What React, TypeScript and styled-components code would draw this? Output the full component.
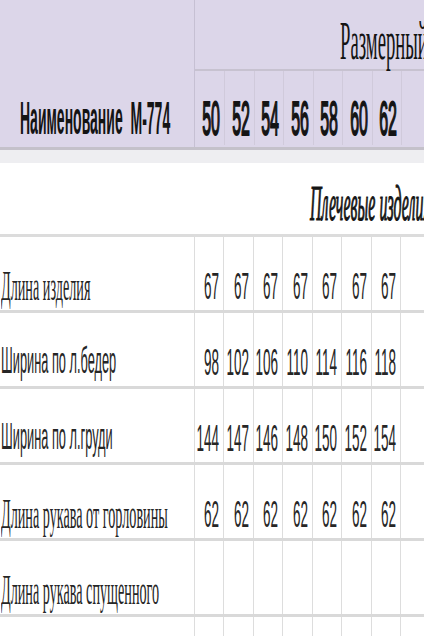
import React from "react";
import styled, { createGlobalStyle } from "styled-components";

const Global = createGlobalStyle`
  html, body { margin: 0; padding: 0; background: #ffffff; }
  body { width: 424px; height: 636px; overflow: hidden; }
`;

const SANS = `"Liberation Sans", Arial, sans-serif`;
const SERIF = `"Liberation Serif", "Times New Roman", serif`;

const COLS = `194px 29px 30px 29px 30px 29px 30px 29px 1fr`;
const SIZE_COLS = `29px 30px 29px 30px 29px 30px 29px 1fr`;

const Sheet = styled.div`
  width: 424px;
  height: 636px;
  overflow: hidden;
  background: #ffffff;
  color: #141414;
`;

const Head = styled.div`
  display: flex;
  background: #dcd6e9;
  border-bottom: 3px solid #c4c1ca;
`;

const NameCell = styled.div`
  width: 194px;
  flex: none;
  height: 147px;
  display: flex;
  align-items: center;
  padding: 86px 0 0 20px;
  box-sizing: border-box;
`;

const SizeBlock = styled.div`
  flex: 1;
  display: flex;
  flex-direction: column;
  border-left: 1px solid #c6c0d3;
  overflow: hidden;
`;

const TitleCell = styled.div`
  height: 71px;
  display: flex;
  align-items: center;
  padding: 16px 0 0 145px;
  box-sizing: border-box;
  border-bottom: 2px solid #c7c2d0;
  white-space: nowrap;
`;

const NumRow = styled.div`
  height: 74px;
  display: grid;
  grid-template-columns: ${SIZE_COLS};
`;

const HeadNum = styled.div<{ $first?: boolean }>`
  display: flex;
  align-items: center;
  justify-content: flex-end;
  padding: 24px 4px 0 0;
  border-left: ${(p) => (p.$first ? "none" : "1px solid #d0cadb")};
`;

const Band = styled.div`
  height: 13px;
  background: #eeeef1;
`;

const Section = styled.div`
  height: 74px;
  display: flex;
  align-items: center;
  padding: 12px 0 0 310px;
  box-sizing: border-box;
  border-bottom: 3px solid #dcdcdc;
  white-space: nowrap;
  overflow: hidden;
`;

const Row = styled.div`
  display: grid;
  grid-template-columns: ${COLS};
  height: 76px;
  box-sizing: border-box;
  border-bottom: 3px solid #d9d9d9;
  color: #262626;
`;

const Label = styled.div`
  display: flex;
  align-items: center;
  padding: 26px 0 0 1px;
  white-space: nowrap;
`;

const Num = styled.div`
  display: flex;
  align-items: center;
  justify-content: flex-end;
  padding: 26px 4px 0 0;
  border-left: 1px solid #dddddd;
`;

const Stretch = styled.span<{
  $font: string;
  $size: number;
  $sy: number;
  $bold?: boolean;
  $italic?: boolean;
  $stroke?: number;
}>`
  display: inline-block;
  font-family: ${(p) => p.$font};
  font-size: ${(p) => p.$size}px;
  font-weight: ${(p) => (p.$bold ? 700 : 400)};
  font-style: ${(p) => (p.$italic ? "italic" : "normal")};
  line-height: 1;
  transform: scaleY(${(p) => p.$sy});
  transform-origin: center;
  white-space: pre;
  -webkit-text-stroke: ${(p) => (p.$stroke ? `${p.$stroke}px currentColor` : "0")};
`;

const sizes = ["50", "52", "54", "56", "58", "60", "62"];

type RowData = { label: string; font: string; size: number; values: string[] };

const rows: RowData[] = [
  { label: "Длина изделия", font: SERIF, size: 14.2, values: ["67", "67", "67", "67", "67", "67", "67"] },
  { label: "Ширина по л.бедер", font: SANS, size: 12.8, values: ["98", "102", "106", "110", "114", "116", "118"] },
  { label: "Ширина по л.груди", font: SANS, size: 12.8, values: ["144", "147", "146", "148", "150", "152", "154"] },
  { label: "Длина рукава от горловины", font: SERIF, size: 14.2, values: ["62", "62", "62", "62", "62", "62", "62"] },
  { label: "Длина рукава спущенного", font: SERIF, size: 14.2, values: ["", "", "", "", "", "", ""] },
  { label: "", font: SERIF, size: 14.2, values: ["", "", "", "", "", "", ""] },
];

export default function App() {
  return (
    <Sheet>
      <Global />
      <Head>
        <NameCell>
          <Stretch $font={SANS} $size={14} $sy={3.3} $bold>
            {"Наименование  М-774"}
          </Stretch>
        </NameCell>
        <SizeBlock>
          <TitleCell>
            <Stretch $font={SERIF} $size={18.7} $sy={2.9}>
              Размерный ряд
            </Stretch>
          </TitleCell>
          <NumRow>
            {sizes.map((s, i) => (
              <HeadNum key={s} $first={i === 0}>
                <Stretch $font={SANS} $size={16} $sy={3} $stroke={0.7}>
                  {s}
                </Stretch>
              </HeadNum>
            ))}
            <HeadNum />
          </NumRow>
        </SizeBlock>
      </Head>
      <Band />
      <Section>
        <Stretch $font={SERIF} $size={16} $sy={3.1} $italic $stroke={0.4}>
          Плечевые изделия
        </Stretch>
      </Section>
      {rows.map((r, ri) => (
        <Row key={ri}>
          <Label>
            <Stretch $font={r.font} $size={r.size} $sy={2.9}>
              {r.label}
            </Stretch>
          </Label>
          {r.values.map((v, vi) => (
            <Num key={vi}>
              <Stretch $font={SANS} $size={13.5} $sy={2.8}>
                {v}
              </Stretch>
            </Num>
          ))}
          <Num />
        </Row>
      ))}
    </Sheet>
  );
}
